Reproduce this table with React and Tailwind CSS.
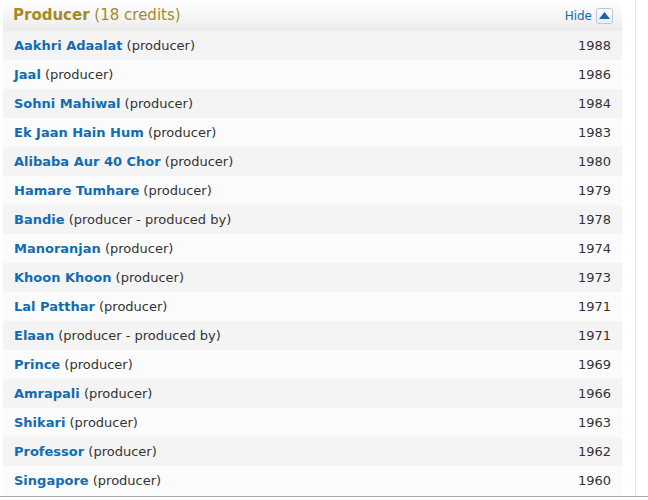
import React from 'react'

const credits = [
  ['Aakhri Adaalat', 'producer', '1988'],
  ['Jaal', 'producer', '1986'],
  ['Sohni Mahiwal', 'producer', '1984'],
  ['Ek Jaan Hain Hum', 'producer', '1983'],
  ['Alibaba Aur 40 Chor', 'producer', '1980'],
  ['Hamare Tumhare', 'producer', '1979'],
  ['Bandie', 'producer - produced by', '1978'],
  ['Manoranjan', 'producer', '1974'],
  ['Khoon Khoon', 'producer', '1973'],
  ['Lal Patthar', 'producer', '1971'],
  ['Elaan', 'producer - produced by', '1971'],
  ['Prince', 'producer', '1969'],
  ['Amrapali', 'producer', '1966'],
  ['Shikari', 'producer', '1963'],
  ['Professor', 'producer', '1962'],
  ['Singapore', 'producer', '1960'],
]

export default function App() {
  return (
    <div className="h-[500px] w-[648px] overflow-hidden bg-white font-['DejaVu_Sans',Verdana,sans-serif] text-[13px] text-[#333]">
      <div className="flex h-[497px] border-b border-[#a8a8a8]">
        <div className="w-[636px] border-r border-[#e4e4e4] pl-[3px] pr-[13px]">
          {/* section header */}
          <div className="flex h-[31px] items-center justify-between bg-gradient-to-b from-white to-[#ececec] pl-[10px] pr-[9px]">
            <div className="text-[15px] text-[#a58a2a]">
              <span className="font-bold">Producer</span> (18 credits)
            </div>
            <div className="flex items-center gap-[4px] text-[12px] text-[#136cb2]">
              <span>Hide</span>
              <span className="flex h-[16px] w-[17px] items-center justify-center rounded-[3px] border border-[#b5c9dc] bg-gradient-to-b from-white to-[#e6edf4]">
                <svg width="11" height="7" viewBox="0 0 11 7">
                  <path d="M5.5 0 L11 7 L0 7 Z" fill="#1d63a8" />
                </svg>
              </span>
            </div>
          </div>
          {credits.map(([title, role, year], i) => (
            <div
              key={title}
              className={`flex h-[29px] items-center justify-between pl-[11px] pr-[11px] ${i % 2 === 0 ? 'bg-[#f4f4f4]' : 'bg-[#fbfbfb]'}`}
            >
              <div>
                <span className="font-bold text-[#136cb2]">{title}</span> ({role})
              </div>
              <div>{year}</div>
            </div>
          ))}
        </div>
      </div>
    </div>
  )
}
